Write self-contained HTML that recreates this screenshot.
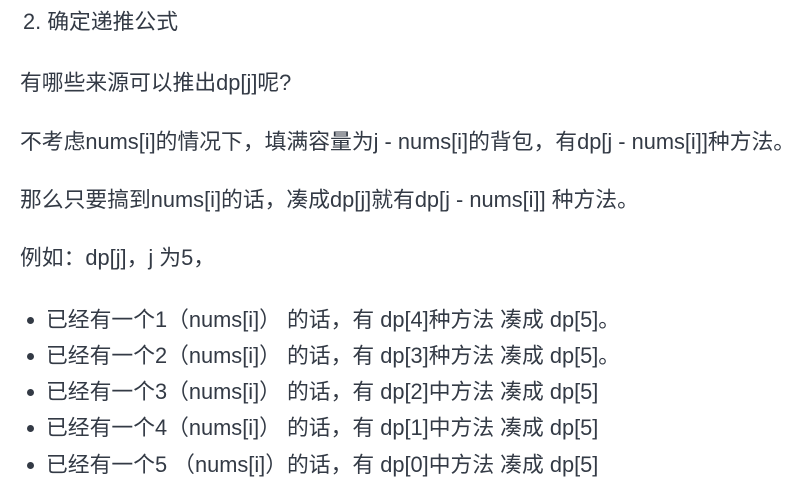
<!DOCTYPE html>
<html><head><meta charset="utf-8"><style>
body{margin:0;width:800px;height:494px;background:#fff;overflow:hidden;color:#333a45;font-family:"Liberation Sans","Noto Sans CJK SC",sans-serif;font-size:21.8px;}
.l{position:absolute;left:20px;white-space:nowrap;line-height:28px;}
.b{position:absolute;left:46px;white-space:nowrap;line-height:28px;}
.b:before{content:"";position:absolute;left:-19px;top:11px;width:7px;height:7px;border-radius:50%;background:#333a45;}
</style></head><body>
<div class="l" style="top:8px;left:23px">2. 确定递推公式</div>
<div class="l" style="top:69px">有哪些来源可以推出dp[j]呢?</div>
<div class="l" style="top:128px">不考虑nums[i]的情况下，填满容量为j - nums[i]的背包，有dp[j - nums[i]]种方法。</div>
<div class="l" style="top:186px">那么只要搞到nums[i]的话，凑成dp[j]就有dp[j - nums[i]] 种方法。</div>
<div class="l" style="top:244px">例如：dp[j]，j 为5，</div>
<div class="b" style="top:306px">已经有一个1（nums[i]） 的话，有 dp[4]种方法 凑成 dp[5]。</div>
<div class="b" style="top:342px">已经有一个2（nums[i]） 的话，有 dp[3]种方法 凑成 dp[5]。</div>
<div class="b" style="top:378px">已经有一个3（nums[i]） 的话，有 dp[2]中方法 凑成 dp[5]</div>
<div class="b" style="top:414px">已经有一个4（nums[i]） 的话，有 dp[1]中方法 凑成 dp[5]</div>
<div class="b" style="top:451px">已经有一个5 （nums[i]）的话，有 dp[0]中方法 凑成 dp[5]</div>
</body></html>
